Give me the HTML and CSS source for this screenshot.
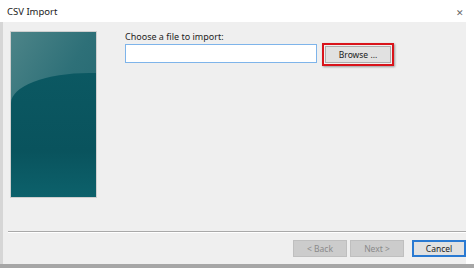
FILE: index.html
```html
<!DOCTYPE html>
<html>

<head>
  <link rel="stylesheet" href="styles.css">
</head>

<body>
  <div class="window">
    <div class="titlebar">
      <span class="title">CSV Import</span>
      <span class="close">&#x2715;</span>
    </div>

    <div class="body">
      <div class="main">
        <!-- wizard side picture -->
        <div class="side-panel">
          <div class="shade"></div>
        </div>

        <div class="page">
          <p class="label">Choose a file to import:</p>
          <div class="file-row">
            <input class="file-input" type="text">
            <div class="highlight">
              <button class="btn browse">Browse ...</button>
            </div>
          </div>
        </div>
      </div>

      <div class="separator"></div>

      <div class="footer">
        <button class="btn nav" disabled>&lt; Back</button>
        <button class="btn nav" disabled>Next &gt;</button>
        <button class="btn cancel">Cancel</button>
      </div>
    </div>
    <div class="bottom-edge"></div>
  </div>
</body>

</html>
```

FILE: styles.css
```css
html,
body {
  margin: 0;
  padding: 0;
  background: #ffffff;
}

body {
  font-family: "Noto Sans", "Open Sans", sans-serif;
  font-size: 9px;
  color: #1a1a1a;
}

.window {
  width: 474px;
  height: 268px;
  display: flex;
  flex-direction: column;
  overflow: hidden;
}

.titlebar {
  height: 22px;
  display: flex;
  align-items: center;
  justify-content: space-between;
  padding: 0 10px 0 7px;
  background: #ffffff;
  flex-shrink: 0;
}

.title {
  font-size: 9.5px;
  color: #222222;
}

.close {
  font-size: 9px;
  color: #666666;
  margin-top: 2px;
}

.body {
  flex: 1;
  display: flex;
  flex-direction: column;
  background: #efefef;
  border-left: 3px solid #d6d6d6;
  margin-right: 8px;
}

.main {
  flex: 1;
  display: flex;
  padding: 9px 0 0 7px;
}

.side-panel {
  position: relative;
  width: 85px;
  height: 165px;
  background: linear-gradient(120deg, #4d8488 0%, #2e7078 45%, #1f656e 100%);
  border: 1px solid #cfcfcf;
  overflow: hidden;
}

/* darker curved lower part of the picture */
.shade {
  position: absolute;
  left: 0;
  top: 41px;
  width: 130px;
  height: 140px;
  border-top-left-radius: 78px 30px;
  background: linear-gradient(180deg, #0b5862 0%, #09535d 55%, #0e6670 100%);
}

.page {
  margin-left: 28px;
}

.label {
  margin: 0;
  font-size: 9px;
  line-height: 12px;
  color: #1e1e1e;
}

.file-row {
  display: flex;
  align-items: flex-start;
}

.file-input {
  width: 192px;
  height: 19px;
  box-sizing: border-box;
  border: 1px solid #7eb4ea;
  background: #ffffff;
  margin: 1px 0 0 0;
  padding: 0;
}

.highlight {
  margin-left: 5px;
  border: 2px solid #d9141b;
  padding: 1px;
  box-shadow: 1px 1px 2px rgba(0, 0, 0, 0.35);
}

.btn {
  font-family: "Noto Sans", "Open Sans", sans-serif;
  font-size: 8.5px;
  height: 17px;
  box-sizing: border-box;
  border: 1px solid #adadad;
  background: #e1e1e1;
  color: #1a1a1a;
  padding: 0;
  margin: 0;
}

.browse {
  width: 66px;
  display: block;
}

.separator {
  margin: 0 0 0 5px;
  height: 1px;
  background: #a9a9a9;
  border-bottom: 1px solid #ffffff;
}

.footer {
  height: 31px;
  display: flex;
  justify-content: flex-end;
  align-items: center;
  gap: 3px;
}

.nav {
  width: 54px;
  background: #cccccc;
  border-color: #bfbfbf;
  color: #8a8a8a;
}

.cancel {
  width: 54px;
  margin-left: 5px;
  border: 2px solid #2a7ad2;
}

.bottom-edge {
  height: 4px;
  background: #a6a6a6;
  flex-shrink: 0;
}
```
